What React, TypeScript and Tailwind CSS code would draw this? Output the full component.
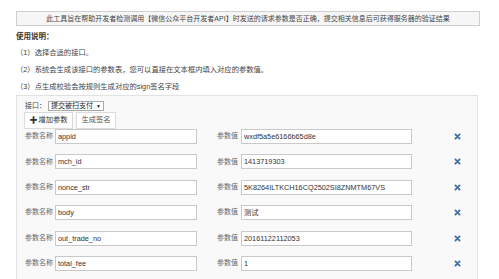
import React from "react";

const rows: [string, string][] = [
  ["appid", "wxdf5a5e6166b65d8e"],
  ["mch_id", "1413719303"],
  ["nonce_str", "5K8264ILTKCH16CQ2502SI8ZNMTM67VS"],
  ["body", "测试"],
  ["out_trade_no", "20161122112053"],
  ["total_fee", "1"],
];

function XIcon() {
  return (
    <svg width="7" height="7" viewBox="0 0 10 10" className="block">
      <path d="M2 2 L8 8 M8 2 L2 8" stroke="#3f6f9e" strokeWidth="2.6" strokeLinecap="round" />
    </svg>
  );
}

export default function App() {
  const font = { fontFamily: '"Liberation Sans", "Noto Sans CJK SC", sans-serif' };
  return (
    <div className="w-[499px] h-[279px] overflow-hidden bg-white text-[#333]" style={font}>
      <div className="pt-[11px] pl-[16px] pr-[19px]">
        <div className="h-[15px] border border-[#cfcfcf] bg-[#f6f6f6] text-center text-[7px] leading-[13px] text-[#444]">
          此工具旨在帮助开发者检测调用【微信公众平台开发者API】时发送的请求参数是否正确，提交相关信息后可获得服务器的验证结果
        </div>
        <div className="mt-[6px] h-[10px] text-[7.5px] leading-[10px] font-bold text-[#333]">使用说明：</div>
        <div className="mt-[2px] text-[7.3px] leading-[17px] text-[#444]">
          <div className="h-[17px]">（1）选择合适的接口。</div>
          <div className="h-[17px]">（2）系统会生成该接口的参数表，您可以直接在文本框内填入对应的参数值。</div>
          <div className="h-[17px]">（3）点生成校验会按规则生成对应的sign签名字段</div>
        </div>
      </div>
      <div className="ml-[16px] w-[462px] h-[200px] border border-[#e2e2e2] bg-[#f9f9f9] pl-[7px] pt-[5px]">
        <div className="flex items-center h-[10px] text-[7px] text-[#444]">
          <span className="w-[24px] pl-[1px]">接口：</span>
          <span className="flex items-center h-[10px] w-[56px] border border-[#a9a9a9] bg-white pl-[2px] leading-[8px] text-[#222]">
            提交被扫支付
            <span className="ml-[3px] text-[5px]">▼</span>
          </span>
        </div>
        <div className="mt-[1px] flex h-[17px] text-[7.3px] text-[#333]">
          <div className="flex items-center w-[49px] justify-center border border-[#dcdcdc] bg-white">
            <span className="font-bold text-[8px] mr-[1px]">✚</span>增加参数
          </div>
          <div className="ml-[3px] flex items-center w-[40px] justify-center border border-[#dcdcdc] bg-white text-[#555]">
            生成签名
          </div>
        </div>
        <div className="flex flex-col gap-[10.4px]">
          {rows.map(([k, v]) => (
            <div key={k} className="flex items-center h-[15px] text-[7px] text-[#666]">
              <span className="w-[31px] pl-[1px] whitespace-nowrap">参数名称</span>
              <div className="w-[142px] h-[15px] border border-[#c9c9c9] bg-white pl-[2px] text-[7.3px] leading-[13px] text-[#333]">{k}</div>
              <span className="ml-[20px] w-[24px] whitespace-nowrap">参数值</span>
              <div className="w-[171px] h-[15px] border border-[#c9c9c9] bg-white pl-[2px] text-[7.3px] leading-[13px] text-[#333] whitespace-nowrap overflow-hidden">{v}</div>
              <div className="ml-[42px]">
                <XIcon />
              </div>
            </div>
          ))}
        </div>
      </div>
    </div>
  );
}
